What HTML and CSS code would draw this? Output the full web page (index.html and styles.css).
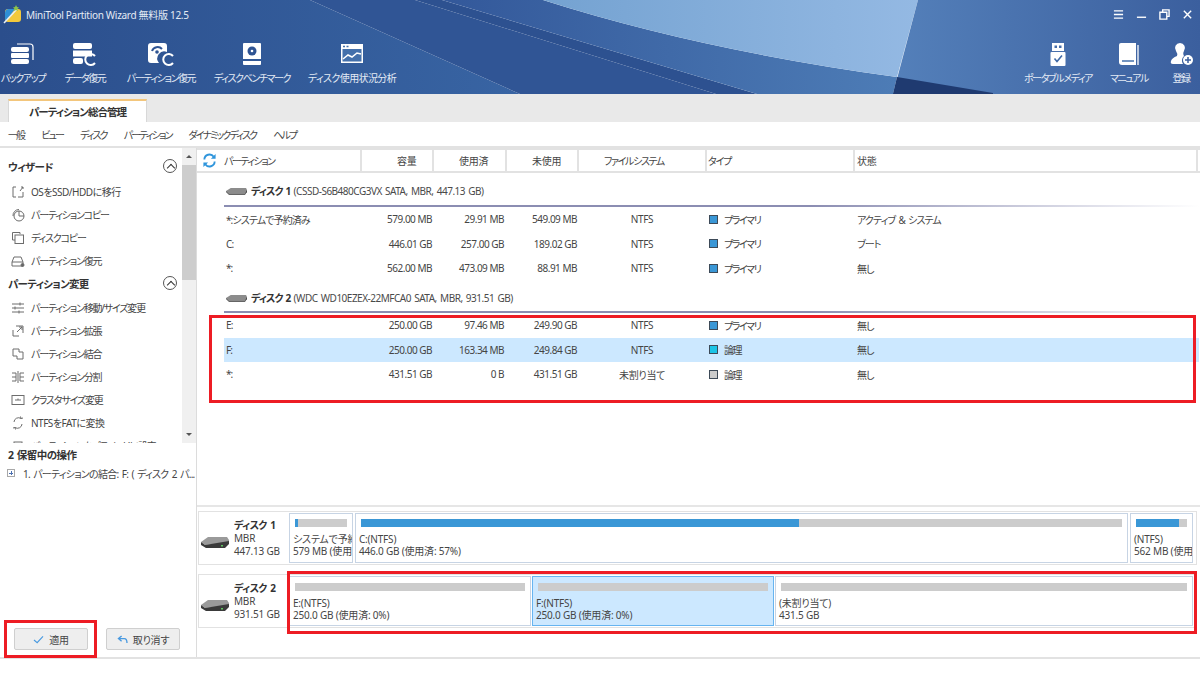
FILE: index.html
```html
<!DOCTYPE html>
<html lang="ja">
<head>
    <meta charset="UTF-8">
    <title>MiniTool Partition Wizard</title>
    <link rel="stylesheet" href="styles.css">
</head>
<body>
<div class="app">
    <!-- Bandeau bleu -->
    <header class="header">
        <svg class="backdrop" viewBox="0 0 1200 94" preserveAspectRatio="none">
            <defs>
                <linearGradient id="light" x1="0" y1="0" x2="1" y2="0">
                    <stop offset="0" stop-color="#74a2d1"/>
                    <stop offset="1" stop-color="#94b9e3"/>
                </linearGradient>
                <linearGradient id="rightside" x1="0" y1="0" x2="1" y2="0">
                    <stop offset="0" stop-color="#5480ba"/>
                    <stop offset="1" stop-color="#3b5f9e"/>
                </linearGradient>
                <linearGradient id="left" x1="0" y1="0" x2="1" y2="0">
                    <stop offset="0" stop-color="#2b4e8c"/>
                    <stop offset="1" stop-color="#3864a3"/>
                </linearGradient>
                <linearGradient id="mid" x1="0" y1="0" x2="1" y2="0">
                    <stop offset="0" stop-color="#33589a"/>
                    <stop offset="1" stop-color="#4d7cb6"/>
                </linearGradient>
            </defs>
            <path d="M0 0H310L520 94H0Z" fill="url(#left)"/>
            <path d="M310 0H415L716 94H520Z" fill="#305595"/>
            <path d="M415 0H442L757 94H716Z" fill="#2d5190"/>
            <path d="M442 0H543Q700 50 897 77L893 94H757Z" fill="url(#mid)"/>
            <path d="M543 0H918L897 77Q700 50 543 0Z" fill="url(#light)"/>
            <path d="M918 0H1200V94H893Z" fill="url(#rightside)"/>
            <path d="M897 77L993 93V94H893Z" fill="#1f3a70"/>
        </svg>

        <div class="titlebar">
            <svg class="logo" viewBox="0 0 20 20">
                <rect x="2" y="5" width="16" height="13" rx="3" fill="#f3c93c"/>
                <path d="M2 9Q2 5 6 5H12L3 17Q2 16 2 14Z" fill="#2f8fd6"/>
                <path d="M1 19L14 5" stroke="#e8eef5" stroke-width="1.600"/>
                <path d="M13 1l1 2 2 .5-1.500 1.500.5 2-2-1-2 1 .5-2L10 3.500l2-.5z" fill="#8bc34a"/>
            </svg>
            <span class="app-title">MiniTool Partition Wizard 無料版 12.5</span>
            <div class="window-buttons">
                <svg viewBox="0 0 12 12"><path d="M1 2H11M1 6H11M1 10H11" stroke="#fff" stroke-width="1.500"/></svg>
                <svg viewBox="0 0 12 12"><path d="M1 9H11" stroke="#fff" stroke-width="1.500"/></svg>
                <svg viewBox="0 0 12 12"><path d="M4 3V1H11V8H9M1 3.500H8.500V11H1Z" fill="none" stroke="#fff" stroke-width="1.500"/></svg>
                <svg viewBox="0 0 12 12"><path d="M2 2L10 10M10 2L2 10" stroke="#fff" stroke-width="1.500"/></svg>
            </div>
        </div>

        <nav class="toolbar">
            <div class="tool">
                <svg viewBox="0 0 26 24"><path d="M7 2H20Q23 2 23 5V18" fill="none" stroke="#fff" stroke-width="1.200"/><rect x="1" y="5" width="18" height="5" rx="2" fill="#fff"/><rect x="1" y="11" width="18" height="5" rx="1" fill="#fff"/><rect x="1" y="17" width="18" height="5" rx="2" fill="#fff"/></svg>
                <span>バックアップ</span>
            </div>
            <div class="tool">
                <svg viewBox="0 0 26 24"><rect x="1" y="1" width="19" height="6" rx="2" fill="#fff"/><rect x="1" y="8.500" width="19" height="6" fill="#fff"/><rect x="1" y="16" width="10" height="6" rx="2" fill="#fff"/><path d="M23 14A5.500 5.500 0 1 0 23 21" fill="none" stroke="#fff" stroke-width="2"/></svg>
                <span>データ復元</span>
            </div>
            <div class="tool">
                <svg viewBox="0 0 26 24"><path d="M3 1H16Q19 1 19 4V10A7 7 0 0 0 11 21H3Q0 21 0 18V4Q0 1 3 1Z" fill="#fff"/><path d="M4 9A6 6 0 0 1 14 7" fill="none" stroke="#2f5493" stroke-width="2"/><circle cx="9" cy="10" r="1.800" fill="#2f5493"/><path d="M25 14A5.500 5.500 0 1 0 25 21" fill="none" stroke="#fff" stroke-width="2"/></svg>
                <span>パーティション復元</span>
            </div>
            <div class="tool">
                <svg viewBox="0 0 26 24"><path d="M5 1H21Q22 1 22 2V17H4V2Q4 1 5 1Z" fill="#fff"/><circle cx="13" cy="9" r="4.500" fill="#2f5493"/><circle cx="13" cy="9" r="1.300" fill="#fff"/><path d="M4 19H22V22Q22 23 21 23H5Q4 23 4 22Z" fill="#fff"/></svg>
                <span>ディスクベンチマーク</span>
            </div>
            <div class="tool wide">
                <svg viewBox="0 0 26 24"><rect x="2" y="2" width="22" height="19" fill="#fff"/><rect x="3.500" y="7" width="19" height="12.500" fill="#4470ab"/><path d="M4 4.500H6M7.500 4.500H9.500" stroke="#4470ab" stroke-width="1.500"/><path d="M4 17L9 13 13 15 18 11 22 12" fill="none" stroke="#fff" stroke-width="1.600"/></svg>
                <span>ディスク使用状況分析</span>
            </div>
            <div class="tool-gap"></div>
            <div class="tool">
                <svg viewBox="0 0 26 24"><path d="M7 1H19V9H7ZM9.500 3.500V6H12V3.500ZM14 3.500V6H16.500V3.500Z" fill="#fff" fill-rule="evenodd"/><rect x="5.500" y="10" width="15" height="14" rx="1" fill="#fff"/><path d="M9.500 16.500L12 19.500 17 13.500" fill="none" stroke="#3f69a6" stroke-width="1.600"/></svg>
                <span>ポータブルメディア</span>
            </div>
            <div class="tool">
                <svg viewBox="0 0 26 24"><path d="M5 1H20V23H6Q3 23 3 20V3Q3 1 5 1Z" fill="#fff"/><path d="M22 3V23" stroke="#fff" stroke-width="1.300"/><path d="M6 19H18" stroke="#4470ab" stroke-width="1.500"/></svg>
                <span>マニュアル</span>
            </div>
            <div class="tool">
                <svg viewBox="0 0 26 24"><path d="M12 1A5 5 0 0 1 16 9C15 11 15 12 16 14A6 6 0 0 0 15 22H5Q2 22 3 19 4 16 9 14 10 12 8 9A5 5 0 0 1 12 1Z" fill="#fff"/><circle cx="20" cy="18" r="5" fill="#fff"/><path d="M17 18H23M20 15V21" stroke="#3b5f9e" stroke-width="1.500"/></svg>
                <span>登録</span>
            </div>
        </nav>
    </header>

    <div class="tabstrip">
        <div class="tab">パーティション総合管理</div>
    </div>

    <div class="menubar">
        <span>一般</span><span>ビュー</span><span>ディスク</span><span>パーティション</span><span>ダイナミックディスク</span><span>ヘルプ</span>
    </div>

    <div class="main">
        <!-- Colonne de gauche -->
        <aside class="sidebar">
            <div class="wizard">
                <div class="wizard-list">
                    <div class="section-head"><b>ウィザード</b><i class="collapse"></i></div>
                    <div class="side-item latin">
                        <svg viewBox="0 0 14 14"><path d="M5 2H2V12H5M7 12H12V7M9 6L12 2M10 2H12V4" /></svg>OSをSSD/HDDに移行
                    </div>
                    <div class="side-item">
                        <svg viewBox="0 0 14 14"><circle cx="8" cy="8" r="5"/><path d="M8 8V3M8 8H13M2 8A6 6 0 0 1 8 1.500"/></svg>パーティションコピー
                    </div>
                    <div class="side-item">
                        <svg viewBox="0 0 14 14"><path d="M9 3V1.500H1.500V9H4"/><rect x="4" y="4" width="8.500" height="8.500"/></svg>ディスクコピー
                    </div>
                    <div class="side-item">
                        <svg viewBox="0 0 14 14"><path d="M1 8L3 3H10L12 8V12H1ZM1 8H12"/><circle cx="11.500" cy="11" r="1.500" fill="#666"/></svg>パーティション復元
                    </div>
                    <div class="section-head next"><b>パーティション変更</b><i class="collapse"></i></div>
                    <div class="side-item">
                        <svg viewBox="0 0 14 14"><path d="M1 3H13M1 7H13M1 11H13M9 1.500V4.500M4 5.500V8.500M8 9.500V12.500"/></svg>パーティション移動/サイズ変更
                    </div>
                    <div class="side-item">
                        <svg viewBox="0 0 14 14"><path d="M5 2H12V9M2 6V12H8M6 8L11 3M8 3H11V6"/></svg>パーティション拡張
                    </div>
                    <div class="side-item">
                        <svg viewBox="0 0 14 14"><path d="M2 2H8V5H12V12H6V9H2Z"/></svg>パーティション結合
                    </div>
                    <div class="side-item">
                        <svg viewBox="0 0 14 14"><path d="M7 1V13M5 3H1M5 11H1M5 3V11M9 3H13M9 11H13M9 3V11M1 7H5M9 7H13"/></svg>パーティション分割
                    </div>
                    <div class="side-item">
                        <svg viewBox="0 0 14 14"><rect x="1" y="2.500" width="12" height="9"/><path d="M4 7H10M7 5.500V7"/></svg>クラスタサイズ変更
                    </div>
                    <div class="side-item latin">
                        <svg viewBox="0 0 14 14"><path d="M3 6A4.500 4.500 0 0 1 10 2.500M11 8A4.500 4.500 0 0 1 4 11.500M2 12L4 11.500 4.500 13.500M12 2L10 2.500 9.500 .5"/></svg>NTFSをFATに変換
                    </div>
                    <div class="side-item">
                        <svg viewBox="0 0 14 14"><rect x="3" y="3" width="8" height="8"/></svg>パーティションをプライマリに設定
                    </div>
                </div>
                <div class="scrollbar">
                    <span class="arrow-up"></span>
                    <div class="thumb"></div>
                    <span class="arrow-down"></span>
                </div>
            </div>

            <div class="pending">
                <h4>2 保留中の操作</h4>
                <div class="pending-item"><span class="tree-plus"></span>1. パーティションの結合: F: ( ディスク 2 パ...</div>
            </div>

            <div class="actions">
                <button class="action">
                    <svg viewBox="0 0 12 10"><path d="M1 5.500L4.500 8.500 11 1.500" fill="none" stroke="#4a9ae0" stroke-width="1.300"/></svg>適用
                </button>
                <button class="action">
                    <svg viewBox="0 0 12 10"><path d="M5 1L1.500 4 5 7M2 4H8Q11 4 11 9" fill="none" stroke="#4a9ae0" stroke-width="1.500"/></svg>取り消す
                </button>
            </div>
        </aside>

        <!-- Partie droite -->
        <section class="content">
            <div class="table">
                <div class="table-head">
                    <div class="th th-name">
                        <svg viewBox="0 0 16 16"><path d="M2.500 7A5.500 5.500 0 0 1 12.500 4M13.500 9A5.500 5.500 0 0 1 3.500 12" fill="none" stroke="#2f95dc" stroke-width="2"/><path d="M14.500 1V6H9.500ZM1.500 15V10H6.500Z" fill="#2f95dc"/></svg>
                        パーティション
                    </div>
                    <div class="th th-size">容量</div>
                    <div class="th th-used">使用済</div>
                    <div class="th th-free">未使用</div>
                    <div class="th th-fs">ファイルシステム</div>
                    <div class="th th-type">タイプ</div>
                    <div class="th th-state">状態</div>
                </div>

                <div class="disk-title first">
                    <svg viewBox="0 0 22 10"><path d="M0 6L5 3H21L22 5V8L20 9H3Z" fill="#8c8c8c"/><path d="M0 6L3 9H20L22 5V6.500L20 10H3L0 7Z" fill="#333"/></svg>
                    <span><b>ディスク 1</b> (CSSD-S6B480CG3VX SATA, MBR, 447.13 GB)</span>
                </div>
                <div class="disk-rule"></div>
                <div class="row">
                    <span>*:システムで予約済み</span><span class="num">579.00 MB</span><span class="num">29.91 MB</span><span class="num">549.09 MB</span><span class="fs">NTFS</span>
                    <span class="type"><i class="swatch primary"></i>プライマリ</span><span class="state">アクティブ &amp; システム</span>
                </div>
                <div class="row">
                    <span>C:</span><span class="num">446.01 GB</span><span class="num">257.00 GB</span><span class="num">189.02 GB</span><span class="fs">NTFS</span>
                    <span class="type"><i class="swatch primary"></i>プライマリ</span><span class="state">ブート</span>
                </div>
                <div class="row">
                    <span>*:</span><span class="num">562.00 MB</span><span class="num">473.09 MB</span><span class="num">88.91 MB</span><span class="fs">NTFS</span>
                    <span class="type"><i class="swatch primary"></i>プライマリ</span><span class="state">無し</span>
                </div>

                <div class="disk-title">
                    <svg viewBox="0 0 22 10"><path d="M0 6L5 3H21L22 5V8L20 9H3Z" fill="#8c8c8c"/><path d="M0 6L3 9H20L22 5V6.500L20 10H3L0 7Z" fill="#333"/></svg>
                    <span><b>ディスク 2</b> (WDC WD10EZEX-22MFCA0 SATA, MBR, 931.51 GB)</span>
                </div>
                <div class="disk-rule"></div>
                <div class="row">
                    <span>E:</span><span class="num">250.00 GB</span><span class="num">97.46 MB</span><span class="num">249.90 GB</span><span class="fs">NTFS</span>
                    <span class="type"><i class="swatch primary"></i>プライマリ</span><span class="state">無し</span>
                </div>
                <div class="row selected">
                    <span>F:</span><span class="num">250.00 GB</span><span class="num">163.34 MB</span><span class="num">249.84 GB</span><span class="fs">NTFS</span>
                    <span class="type"><i class="swatch logical"></i>論理</span><span class="state">無し</span>
                </div>
                <div class="row">
                    <span>*:</span><span class="num">431.51 GB</span><span class="num">0 B</span><span class="num">431.51 GB</span><span class="fs">未割り当て</span>
                    <span class="type"><i class="swatch unalloc"></i>論理</span><span class="state">無し</span>
                </div>
            </div>

            <div class="diskmap">
                <div class="disk-panel">
                    <div class="disk-info">
                        <svg viewBox="0 0 28 14"><path d="M0 7L7 2H26L28 5V8L4 10Z" fill="#9a9a9a"/><path d="M0 7L4 10 28 6V9L24 13H5L0 10Z" fill="#3a3a3a"/><rect x="20" y="10" width="2" height="1.500" fill="#5fc35f"/></svg>
                        <div class="disk-text"><b>ディスク 1</b><span>MBR</span><span>447.13 GB</span></div>
                    </div>
                    <div class="cell w-sys">
                        <div class="bar"><div class="fill" style="width:5%"></div></div>
                        <p>システムで予約済み</p><p>579 MB (使用済: 5%)</p>
                    </div>
                    <div class="cell w-c">
                        <div class="bar"><div class="fill" style="width:57.600%"></div></div>
                        <p>C:(NTFS)</p><p>446.0 GB (使用済: 57%)</p>
                    </div>
                    <div class="cell w-end">
                        <div class="bar"><div class="fill" style="width:84%"></div></div>
                        <p>(NTFS)</p><p>562 MB (使用済: 84%)</p>
                    </div>
                </div>
                <div class="disk-panel second">
                    <div class="disk-info">
                        <svg viewBox="0 0 28 14"><path d="M0 7L7 2H26L28 5V8L4 10Z" fill="#9a9a9a"/><path d="M0 7L4 10 28 6V9L24 13H5L0 10Z" fill="#3a3a3a"/><rect x="20" y="10" width="2" height="1.500" fill="#5fc35f"/></svg>
                        <div class="disk-text"><b>ディスク 2</b><span>MBR</span><span>931.51 GB</span></div>
                    </div>
                    <div class="cell w-e">
                        <div class="bar"></div>
                        <p>E:(NTFS)</p><p>250.0 GB (使用済: 0%)</p>
                    </div>
                    <div class="cell w-e current">
                        <div class="bar"></div>
                        <p>F:(NTFS)</p><p>250.0 GB (使用済: 0%)</p>
                    </div>
                    <div class="cell w-rest">
                        <div class="bar"></div>
                        <p>(未割り当て)</p><p>431.5 GB</p>
                    </div>
                </div>
            </div>
        </section>
    </div>

    <div class="statusbar"></div>

    <!-- Annotations rouges par-dessus la capture -->
    <div class="mark mark-rows"></div>
    <div class="mark mark-map"></div>
    <div class="mark mark-apply"></div>
</div>
</body>
</html>
```

FILE: styles.css
```css
* {
    box-sizing: border-box;
}

body {
    margin: 0;
    background: #fff;
}

.app {
    position: relative;
    display: flex;
    flex-direction: column;
    width: 1200px;
    height: 675px;
    overflow: hidden;
    font-family: "Noto Sans", "Noto Sans CJK JP", sans-serif;
    font-size: 10px;
    letter-spacing: -0.2px;
    font-feature-settings: "palt";
    color: #454545;
}

/* Bandeau */
.header {
    position: relative;
    height: 94px;
    flex: none;
    color: #e4ebf5;
}

.backdrop {
    position: absolute;
    left: 0;
    top: 0;
    width: 100%;
    height: 100%;
}

.titlebar {
    position: relative;
    display: flex;
    align-items: center;
    height: 28px;
    padding-left: 3px;
}

.logo {
    width: 20px;
    height: 20px;
    margin-right: 3px;
}

.app-title {
    letter-spacing: -0.3px;
}

.window-buttons {
    display: flex;
    gap: 12px;
    margin-left: auto;
    padding-right: 7px;
}

.window-buttons svg {
    width: 11px;
    height: 11px;
}

.toolbar {
    position: relative;
    display: grid;
    grid-template-columns: 46px 78px 74px 108px 92px 1fr 68px 74px 30px;
    padding: 14px 4px 0 0;
}

.tool {
    display: flex;
    flex-direction: column;
    align-items: center;
    white-space: nowrap;
    letter-spacing: -1.4px;
}

.tool.wide {
    letter-spacing: -0.6px;
}

.tool svg {
    width: 26px;
    height: 24px;
    margin: 0 0 4px;
    overflow: visible;
}

/* Onglet et menu */
.tabstrip {
    flex: none;
    height: 28px;
    padding: 5px 0 0 8px;
    background: #e9e9e9;
}

.tab {
    width: 139px;
    height: 23px;
    padding-top: 3px;
    text-align: center;
    font-size: 10.5px;
    font-weight: 700;
    letter-spacing: -1px;
    color: #333;
    background: #fff;
    border-top: 2px solid #f3c67c;
    border-right: 1px solid #d8d8d8;
    border-left: 1px solid #d8d8d8;
}

.menubar {
    display: flex;
    flex: none;
    align-items: center;
    gap: 17px;
    height: 26px;
    padding-left: 8px;
    letter-spacing: -1.9px;
    border-bottom: 2px solid #e2e2e2;
}

/* Colonne de gauche */
.main {
    display: flex;
    flex: 1;
    min-height: 0;
    border-bottom: 2px solid #e2e2e2;
}

.sidebar {
    display: flex;
    flex-direction: column;
    flex: none;
    width: 197px;
    border-right: 1px solid #dcdcdc;
}

.wizard {
    display: flex;
    flex: none;
    height: 295px;
}

.wizard-list {
    flex: 1;
    overflow: hidden;
    padding: 6px 0 0 8px;
}

.section-head {
    display: flex;
    align-items: center;
    justify-content: space-between;
    height: 24px;
    margin-bottom: 2px;
    padding-right: 5px;
    color: #333;
    font-size: 10.5px;
    letter-spacing: -0.7px;
}

.section-head.next {
    margin: -1px 0 1px;
}

.collapse {
    position: relative;
    width: 14px;
    height: 14px;
    border: 1px solid #555;
    border-radius: 50%;
}

.collapse::after {
    content: "";
    position: absolute;
    left: 3.500px;
    top: 4.500px;
    width: 5px;
    height: 5px;
    border-top: 1.500px solid #333;
    border-left: 1.500px solid #333;
    transform: rotate(45deg);
}

.side-item {
    display: flex;
    align-items: center;
    height: 23px;
    padding-left: 3px;
    white-space: nowrap;
    letter-spacing: -1.2px;
}

.side-item.latin {
    letter-spacing: -0.5px;
}

.side-item svg {
    flex: none;
    width: 14px;
    height: 14px;
    margin-right: 6px;
    fill: none;
    stroke: #6d6d6d;
    stroke-width: 1;
}

.scrollbar {
    display: flex;
    flex-direction: column;
    align-items: center;
    flex: none;
    width: 14px;
    background: #f0f0f0;
}

.arrow-up,
.arrow-down {
    flex: none;
    width: 0;
    height: 0;
    margin: 7px 0;
    border-right: 3px solid transparent;
    border-left: 3px solid transparent;
}

.arrow-up {
    border-bottom: 3px solid #555;
}

.arrow-down {
    margin-top: auto;
    border-top: 3px solid #555;
}

.thumb {
    width: 100%;
    height: 115px;
    background: #cdcdcd;
}

.pending {
    padding-left: 7px;
}

.pending h4 {
    margin: 4px 0 0 1px;
    font-size: 10.5px;
    line-height: 16px;
    letter-spacing: -0.5px;
    word-spacing: 1px;
    color: #333;
}

.pending-item {
    display: flex;
    align-items: center;
    height: 20px;
    white-space: nowrap;
    letter-spacing: -0.75px;
    word-spacing: 1.5px;
}

.tree-plus {
    position: relative;
    flex: none;
    width: 8px;
    height: 8px;
    margin-right: 8px;
    border: 1px solid #a8a8a8;
}

.tree-plus::before {
    content: "";
    position: absolute;
    left: 1px;
    top: 2.500px;
    width: 4px;
    height: 1px;
    background: #4b6fb0;
}

.tree-plus::after {
    content: "";
    position: absolute;
    left: 2.500px;
    top: 1px;
    width: 1px;
    height: 4px;
    background: #4b6fb0;
}

.actions {
    display: flex;
    gap: 18px;
    margin-top: auto;
    padding: 0 0 7px 14px;
}

.action {
    display: flex;
    align-items: center;
    justify-content: center;
    gap: 5px;
    width: 74px;
    height: 22px;
    padding: 0;
    font: inherit;
    letter-spacing: inherit;
    color: #454545;
    background: #eeeeee;
    border: 1px solid #cfcfcf;
    border-radius: 2px;
}

.action svg {
    width: 11px;
    height: 9px;
}

/* Tableau */
.content {
    display: flex;
    flex-direction: column;
    flex: 1;
    min-width: 0;
}

.table {
    flex: 1;
    min-height: 0;
    border-bottom: 2px solid #e6e6e6;
}

.table-head {
    display: grid;
    grid-template-columns: 165px 72px 73px 72px 128px 148px 343px;
    height: 25px;
    border-top: 2px solid #e2e2e2;
    border-bottom: 2px solid #e2e2e2;
}

.th {
    display: flex;
    align-items: center;
    border-right: 2px solid #e2e2e2;
    white-space: nowrap;
}

.th-name {
    padding-left: 5px;
    letter-spacing: -1.5px;
}

.th-name svg {
    width: 15px;
    height: 15px;
    margin-right: 7px;
}

.th-size {
    padding-left: 35px;
}

.th-used {
    padding-left: 25px;
}

.th-free {
    padding-left: 25px;
}

.th-fs {
    padding-left: 25px;
    letter-spacing: -1.4px;
}

.th-type {
    padding-left: 1px;
    letter-spacing: -1.2px;
}

.th-state {
    padding-left: 2px;
}

.disk-title {
    display: flex;
    align-items: center;
    height: 30.500px;
    margin-left: 29px;
    padding-top: 3px;
    white-space: nowrap;
    letter-spacing: -0.5px;
    word-spacing: 1.2px;
    color: #4a4a4a;
}

.disk-title.first {
    height: 32px;
    padding-top: 2px;
}

.disk-title svg {
    width: 21px;
    height: 10px;
    margin-right: 4px;
}

.disk-title b {
    color: #333;
    letter-spacing: -0.9px;
}

.disk-rule {
    height: 2px;
    margin-left: 27px;
    background: linear-gradient(to right, #8b8db2, #8b8db2 60%, #fff);
}

.row {
    display: grid;
    grid-template-columns: 135px 71px 72px 73px 130px 148px 1fr;
    align-items: center;
    height: 24.500px;
    margin: 0 1px 0 27px;
    padding-left: 2px;
    white-space: nowrap;
    letter-spacing: -0.9px;
}

.row.selected {
    background: #cce8ff;
}

.num {
    text-align: right;
    letter-spacing: -0.5px;
}

.fs {
    text-align: center;
    letter-spacing: -0.3px;
}

.type {
    display: flex;
    align-items: center;
    padding-left: 2px;
    letter-spacing: -1.5px;
}

.state {
    padding-left: 2px;
    word-spacing: 1.5px;
}

.swatch {
    width: 9px;
    height: 9px;
    margin-right: 6px;
    border: 1px solid #3d4a58;
}

.primary {
    background: #3a97d6;
}

.logical {
    background: #1cc4e6;
}

.unalloc {
    background: #cccccc;
}

/* Carte des disques */
.diskmap {
    flex: none;
    height: 150px;
    padding: 4px 3px 0 1px;
}

.disk-panel {
    display: flex;
    gap: 2px;
    height: 54px;
    padding: 1px 3px 1px 0;
    border: 1px solid #e2e2e2;
}

.disk-panel.second {
    margin-top: 9px;
}

.disk-info {
    display: flex;
    align-items: center;
    flex: none;
    width: 88px;
    padding-left: 2px;
}

.disk-info svg {
    width: 28px;
    height: 14px;
    margin: 8px 5px 0 0;
}

.disk-text {
    display: flex;
    flex-direction: column;
    line-height: 13px;
}

.disk-text b {
    color: #333;
    letter-spacing: -0.6px;
    word-spacing: 1.5px;
}

.cell {
    overflow: hidden;
    padding: 5px 3px 0 3px;
    white-space: nowrap;
    border: 1px solid #c7d4e4;
}

.cell p {
    margin: 0;
    line-height: 12px;
}

.bar {
    height: 8px;
    margin: 0 2px 6px;
    background: #cccccc;
}

.fill {
    height: 100%;
    background: #3a97d6;
}

.w-sys {
    width: 64px;
}

.w-c {
    width: 774px;
}

.w-end {
    width: 63px;
}

.w-e {
    width: 242px;
}

.w-rest {
    width: 418px;
}

.second .cell {
    margin-right: -1px;
    padding-top: 6px;
}

.cell.current {
    background: #cce8ff;
    border-color: #66b4f0;
}

.statusbar {
    flex: none;
    height: 16px;
}

/* Cadres rouges */
.mark {
    position: absolute;
    border: 3px solid #ed1c24;
}

.mark-rows {
    left: 209px;
    top: 315px;
    width: 987px;
    height: 88px;
}

.mark-map {
    left: 287px;
    top: 571px;
    width: 910px;
    height: 63px;
}

.mark-apply {
    left: 4px;
    top: 620px;
    width: 93px;
    height: 38px;
}
```
